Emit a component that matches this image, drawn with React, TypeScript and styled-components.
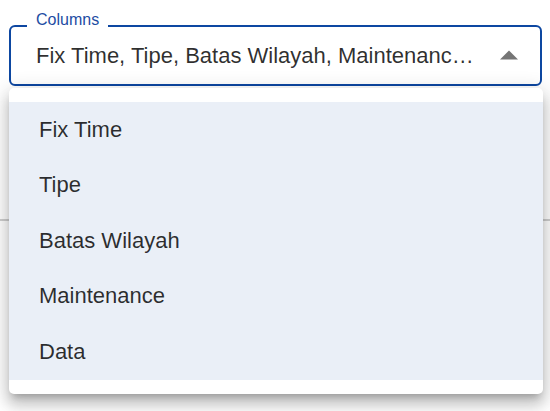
import styled, { createGlobalStyle } from "styled-components";

const GlobalStyle = createGlobalStyle`
  html, body {
    margin: 0;
    padding: 0;
    background: #ffffff;
    font-family: "Liberation Sans", Arial, sans-serif;
  }
`;

const Page = styled.div`
  width: 550px;
  height: 411px;
  box-sizing: border-box;
  padding: 25px 8px 0 9px;
  overflow: hidden;
`;

const FormControl = styled.div`
  position: relative;
  z-index: 1;
  width: 533px;
`;

const SelectBox = styled.div`
  box-sizing: border-box;
  height: 61px;
  border: 2px solid #0d47a1;
  border-radius: 6px;
  background: #ffffff;
  display: flex;
  align-items: center;
  padding: 0 22px 0 25px;
  gap: 18px;
`;

const Label = styled.span`
  position: absolute;
  top: -13px;
  left: 18px;
  padding: 0 9px;
  background: #ffffff;
  font-size: 16px;
  line-height: 16px;
  color: #1d4ca3;
`;

const Value = styled.div`
  flex: 1;
  min-width: 0;
  white-space: nowrap;
  overflow: hidden;
  text-overflow: ellipsis;
  font-size: 22px;
  color: rgba(0, 0, 0, 0.82);
`;

const Arrow = styled.svg`
  flex: none;
  width: 18px;
  height: 10px;
  fill: #757575;
  margin-top: -2px;
`;

const Divider = styled.div`
  margin: 133px -8px 0 -9px;
  height: 2px;
  background: #cfcfcf;
`;

const Menu = styled.div`
  position: absolute;
  top: calc(100% + 2px);
  left: 0;
  width: 534px;
  box-sizing: border-box;
  padding: 14px 0;
  background: #ffffff;
  border-radius: 5px;
  box-shadow: 0px 6px 7px -4px rgba(0, 0, 0, 0.22),
    0px 11px 14px 1px rgba(0, 0, 0, 0.15),
    0px 4px 19px 3px rgba(0, 0, 0, 0.14);
`;

const MenuItem = styled.div<{ $selected?: boolean }>`
  height: 55.5px;
  display: flex;
  align-items: center;
  padding: 0 30px;
  font-size: 22px;
  color: rgba(0, 0, 0, 0.82);
  background: ${(p) => (p.$selected ? "#eaeff7" : "transparent")};
`;

const columns = ["Fix Time", "Tipe", "Batas Wilayah", "Maintenance", "Data"];

export default function App() {
  return (
    <>
      <GlobalStyle />
      <Page>
        <FormControl>
          <Label>Columns</Label>
          <SelectBox>
            <Value>{columns.join(", ")}</Value>
            <Arrow viewBox="0 0 18 10">
              <path d="M0 9.5 L9 0.5 L18 9.5 Z" />
            </Arrow>
          </SelectBox>
          <Menu>
            {columns.map((c) => (
              <MenuItem key={c} $selected>
                {c}
              </MenuItem>
            ))}
          </Menu>
        </FormControl>
        <Divider />
      </Page>
    </>
  );
}
